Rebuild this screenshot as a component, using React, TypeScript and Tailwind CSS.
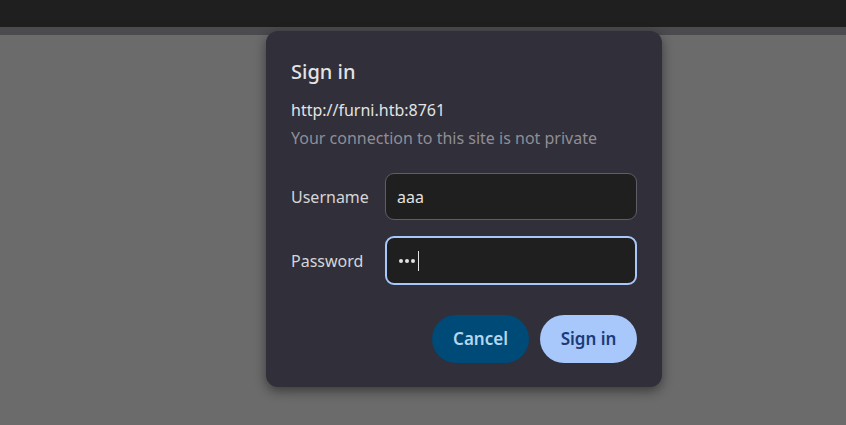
export default function App() {
  return (
    <div
      className="relative w-[846px] h-[425px] overflow-hidden bg-[#6b6b6b]"
      style={{ fontFamily: '"Noto Sans", "Open Sans", sans-serif' }}
    >
      {/* browser chrome */}
      <div className="h-[27px] bg-[#1f1f1f]" />
      <div className="h-[8px] bg-[#4a4a4f]" />

      {/* auth dialog */}
      <div className="absolute left-[266px] top-[31px] w-[396px] h-[356px] rounded-[12px] bg-[#302f3a] shadow-[0_4px_12px_rgba(0,0,0,0.45)] px-[25px] pt-[27px]">
        <h1 className="text-[20px] leading-[28px] font-medium text-[#e3e3e3]">Sign in</h1>
        <div className="mt-[13px] text-[16px] leading-[22px] text-[#e3e3e3]">http://furni.htb:8761</div>
        <div className="mt-[6px] text-[16px] leading-[22px] text-[#8f8e96]">
          Your connection to this site is not private
        </div>

        <div className="mt-[24px] flex flex-col gap-[16px]">
          <div className="flex items-center">
            <label className="w-[94px] text-[16px] text-[#d6d6d6]">Username</label>
            <div className="flex-1 h-[47px] rounded-[9px] bg-[#1f1f1f] border border-[#5e5e66] flex items-center px-[11px] text-[16px] text-[#e3e3e3]">
              aaa
            </div>
          </div>
          <div className="flex items-center">
            <label className="w-[94px] text-[16px] text-[#d6d6d6]">Password</label>
            <div className="flex-1 h-[49px] rounded-[9px] bg-[#1f1f1f] border-2 border-[#a8c7fa] flex items-center px-[12px] text-[#e3e3e3]">
              <span className="flex gap-[2px]">
                <span className="w-[4px] h-[4px] rounded-full bg-[#e3e3e3]" />
                <span className="w-[4px] h-[4px] rounded-full bg-[#e3e3e3]" />
                <span className="w-[4px] h-[4px] rounded-full bg-[#e3e3e3]" />
              </span>
              <span className="ml-[3px] w-px h-[20px] bg-[#e3e3e3]" />
            </div>
          </div>
        </div>

        <div className="mt-[30px] flex justify-end gap-[11px]">
          <button className="w-[97px] h-[48px] rounded-full bg-[#004a77] text-[#b4d6f0] text-[17px] font-semibold">
            Cancel
          </button>
          <button className="w-[97px] h-[48px] rounded-full bg-[#a8c7fa] text-[#1b3a78] text-[17px] font-semibold">
            Sign in
          </button>
        </div>
      </div>
    </div>
  );
}
